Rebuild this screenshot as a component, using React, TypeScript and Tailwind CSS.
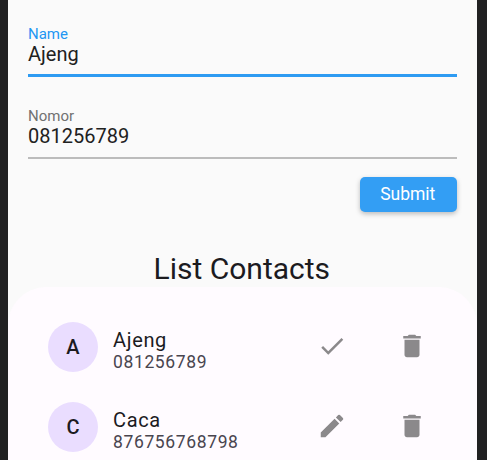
const ICONS = {
  check: 'M9 16.17 4.83 12l-1.42 1.41L9 19 21 7l-1.41-1.41z',
  edit: 'M3 17.25V21h3.75L17.81 9.94l-3.75-3.75L3 17.25zM20.71 7.04a.996.996 0 0 0 0-1.41l-2.34-2.34a.996.996 0 0 0-1.41 0l-1.83 1.83 3.75 3.75 1.83-1.83z',
  trash: 'M6 19c0 1.1.9 2 2 2h8c1.1 0 2-.9 2-2V7H6v12zM19 4h-3.5l-1-1h-5l-1 1H5v2h14V4z',
};

function Icon({ name }: { name: keyof typeof ICONS }) {
  return (
    <svg viewBox="0 0 24 24" className="size-[30px] shrink-0 fill-[#8b898b]">
      <path d={ICONS[name]} />
    </svg>
  );
}

type Contact = { name: string; number: string; action: 'check' | 'edit' };

const contacts: Contact[] = [
  { name: 'Ajeng', number: '081256789', action: 'check' },
  { name: 'Caca', number: '876756768798', action: 'edit' },
];

function ContactRow({ name, number, action }: Contact) {
  return (
    <li className="flex h-20 items-center pr-[50.5px] pl-10">
      <div className="flex size-[50px] shrink-0 items-center justify-center rounded-full bg-[#eaddff] text-[20px] font-medium text-[#1c1b1f]">
        {name[0]}
      </div>
      <div className="ml-[15px] flex-1 pt-1.5">
        <div className="text-[20px] leading-[24px] tracking-[0.65px] text-[#1c1b1f]">{name}</div>
        <div className="text-[17.5px] leading-[20px] tracking-[0.63px] text-[#49454f]">{number}</div>
      </div>
      <div className="flex gap-[50px] pb-0.5">
        <Icon name={action} />
        <Icon name="trash" />
      </div>
    </li>
  );
}

export default function App() {
  return (
    <div className="h-[460px] overflow-hidden bg-[#212122] pr-[10px] pl-2 font-['Roboto',sans-serif]">
      <main className="flex h-full flex-col bg-[#fafafa]">
        <form className="flex flex-col pr-[20.5px] pl-5 pt-[25px] text-[#212121]">
          <div className="h-[52px] border-b-[3px] border-[#2e9bf2]">
            <div className="text-[15px] leading-[18px] text-[#2196f3]">Name</div>
            <div className="text-[20px] leading-[22px]">Ajeng</div>
          </div>
          <div className="mt-[30px] h-[52px] border-b-2 border-[#bcbcbc]">
            <div className="text-[15px] leading-[18px] text-[#717171]">Nomor</div>
            <div className="text-[20px] leading-[22px]">081256789</div>
          </div>
          <button
            type="button"
            className="mt-[18px] h-[35px] w-[96.5px] self-end rounded-[5px] bg-[#339ef4] pr-px text-[17.5px] text-white shadow-[0_2px_5px_rgba(0,0,0,0.25)]"
          >
            Submit
          </button>
        </form>
        <h1 className="mt-[39px] h-[36px] pr-[1.5px] text-center text-[30px] leading-[36px] text-[#1c1b1f]">List Contacts</h1>
        <ul className="flex-1 overflow-hidden rounded-t-[38px] bg-[#fffbff] pt-5">
          {contacts.map((c) => (
            <ContactRow key={c.name} {...c} />
          ))}
        </ul>
      </main>
    </div>
  );
}
